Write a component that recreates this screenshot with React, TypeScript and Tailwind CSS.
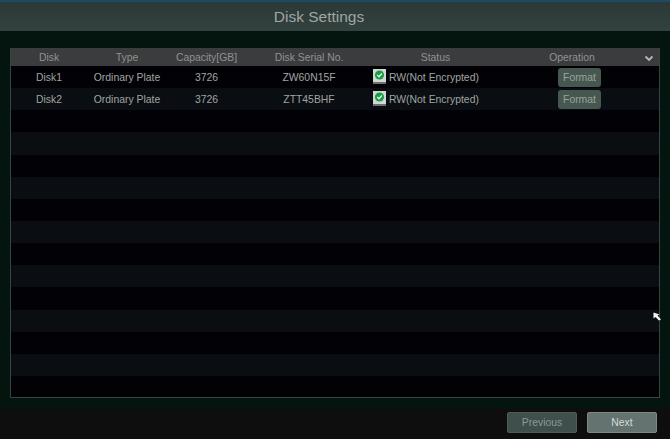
const cols = "grid grid-cols-[76px_80px_79px_126px_127px_145px_15px]";

function DiskIcon() {
  return (
    <svg width="14" height="16" viewBox="0 0 14 16" className="shrink-0 -translate-y-[1px]">
      <rect x="0" y="0" width="13" height="13" fill="#d3d8d3" />
      <rect x="0" y="13" width="13" height="2" fill="#6d6f70" />
      <circle cx="6.5" cy="6" r="4.6" fill="#1c9c45" />
      <path d="M4.2 6 L6 7.8 L8.9 4.5" fill="none" stroke="#e6f5ea" strokeWidth="1.3" />
    </svg>
  );
}

function DiskRow({ name, serial, index }: { name: string; serial: string; index: number }) {
  return (
    <div className={`${cols} h-[22.15px] items-center pt-[1px] ${index % 2 ? "bg-[#0a0d11]" : "bg-[#020206]"}`}>
      <div className="text-center">{name}</div>
      <div className="text-center">Ordinary Plate</div>
      <div className="text-center">3726</div>
      <div className="text-center">{serial}</div>
      <div className="flex items-center gap-[2px] pl-[1px]">
        <DiskIcon />
        <span>RW(Not Encrypted)</span>
      </div>
      <div className="pl-[59px]">
        <button className="flex h-[19px] w-[43px] items-center justify-center rounded-[3px] bg-[#46574f] text-[#98a39d]">Format</button>
      </div>
      <div />
    </div>
  );
}

const empties = Array.from({ length: 13 }, (_, i) => i + 2);

export default function App() {
  return (
    <div className="relative flex h-[439px] w-[670px] flex-col overflow-hidden bg-[#04140f] font-['Liberation_Sans',sans-serif] text-[10.4px] text-[#a0a5a3]">
      <div className="h-[2px] bg-[#1f4a63]" />
      <div className="flex h-[29px] items-center justify-center bg-gradient-to-b from-[#2a3836] to-[#34423f] pr-[32px] pt-[1px] text-[15.5px] text-[#a0a6a4]">
        Disk Settings
      </div>
      <div className="flex-1 px-[10px] pt-[17px]">
        <div className="h-[350px] overflow-hidden border-x border-b border-[#38443f] bg-[#020206]">
          <div className={`${cols} h-[18px] items-center bg-[#3a3c3e] pt-[2px] text-[#8f9394]`}>
            <div className="text-center">Disk</div>
            <div className="text-center">Type</div>
            <div className="text-center">Capacity[GB]</div>
            <div className="text-center">Disk Serial No.</div>
            <div className="text-center">Status</div>
            <div className="pl-[1px] text-center">Operation</div>
            <svg width="10" height="7" viewBox="0 0 10 7">
              <path d="M1.5 1.5 L5 5 L8.5 1.5" fill="none" stroke="#b5bab8" strokeWidth="1.8" />
            </svg>
          </div>
          <DiskRow name="Disk1" serial="ZW60N15F" index={0} />
          <DiskRow name="Disk2" serial="ZTT45BHF" index={1} />
          {empties.map((i) => (
            <div key={i} className={`h-[22.15px] ${i % 2 ? "bg-[#0a0d11]" : "bg-[#020206]"}`} />
          ))}
        </div>
      </div>
      <div className="flex h-[31px] items-start justify-end gap-[10px] bg-[#0e0e0e] pr-[13px] pt-[4px]">
        <button className="h-[21px] w-[70px] rounded-[2px] border border-[#4c5c57] bg-[#3f4f4b] text-[#8d9995]">Previous</button>
        <button className="h-[21px] w-[70px] rounded-[2px] border border-[#7b8a86] bg-[#64736f] text-[#d5dbd8]">Next</button>
      </div>
      <svg width="9" height="10" viewBox="0 0 9 10" className="absolute left-[653px] top-[312px]">
        <path d="M0.5 0.5 L0.5 6.5 L2.5 5 L6 8.5 L8 7.5 L4.5 3.5 L6.5 2.5 Z" fill="#f5f5f5" />
      </svg>
    </div>
  );
}
